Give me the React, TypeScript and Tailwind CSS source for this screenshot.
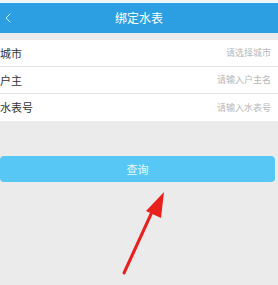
import { LuChevronLeft } from 'react-icons/lu';

const rows = [
  { label: '城市', hint: '请选择城市' },
  { label: '户主', hint: '请输入户主名' },
  { label: '水表号', hint: '请输入水表号' },
];

export default function App() {
  return (
    <div
      className="relative h-[285px] w-[278px] overflow-hidden bg-[#ebebeb]"
      style={{ fontFamily: '"Noto Sans CJK SC", "Noto Sans", sans-serif' }}
    >
      {/* Header */}
      <div className="h-[3px] bg-[#eef6fb]" />
      <header className="relative flex h-[30px] items-center justify-center bg-[#2c9fe2]">
        <LuChevronLeft className="absolute left-0 h-4 w-4 text-white/80" strokeWidth={1.5} />
        <span className="text-[12px] text-white">绑定水表</span>
      </header>

      {/* Form */}
      <div className="mt-[7px] bg-white">
        {rows.map((r, i) => (
          <div
            key={r.label}
            className={`flex h-[27px] items-center justify-between pr-[7px] ${
              i < rows.length - 1 ? 'border-b border-[#e3e3e3]' : ''
            }`}
          >
            <span className="text-[11px] text-[#333]">{r.label}</span>
            <span className="text-[9px] text-[#b8b8b8]">{r.hint}</span>
          </div>
        ))}
      </div>

      {/* Button */}
      <div className="mt-[35px] pr-[3px]">
        <button className="flex h-[26px] w-full items-center justify-center rounded-[4px] bg-[#57c8f6] text-[11px] text-[#eaf8fe]">
          查询
        </button>
      </div>

      {/* Arrow */}
      <svg className="absolute left-0 top-0" width="278" height="285" viewBox="0 0 278 285">
        <line x1="124" y1="273" x2="152" y2="212" stroke="#e8201e" strokeWidth="3" strokeLinecap="round" />
        <polygon points="164,192 146,211 161,218" fill="#e8201e" />
      </svg>
    </div>
  );
}
